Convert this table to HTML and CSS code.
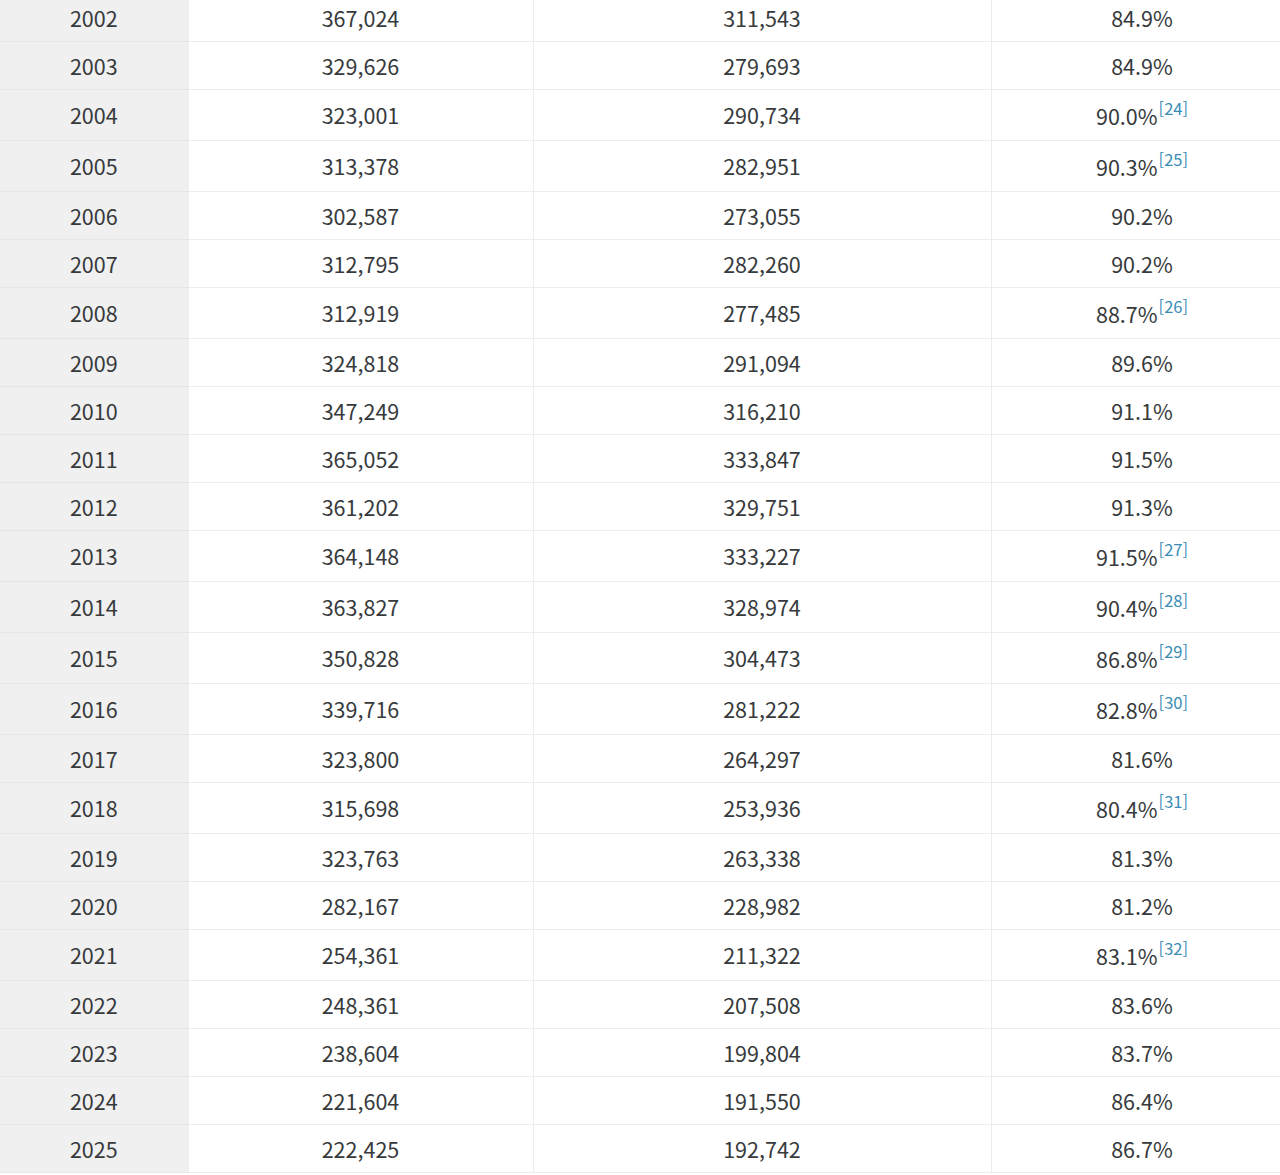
FILE: index.html
```html
<!DOCTYPE html>
<html lang="ko">
<head>
<meta charset="utf-8">
<title>Table</title>
<link rel="stylesheet" href="styles.css">
</head>
<body>
<div class="wrap">
<table class="stats">
<colgroup><col class="c1"><col class="c2"><col class="c3"><col class="c4"></colgroup>
<tbody>
<tr><td class="yr">2002</td><td>367,024</td><td>311,543</td><td>84.9%</td></tr>
<tr><td class="yr">2003</td><td>329,626</td><td>279,693</td><td>84.9%</td></tr>
<tr class="note"><td class="yr">2004</td><td>323,001</td><td>290,734</td><td>90.0%<sup>[24]</sup></td></tr>
<tr class="note"><td class="yr">2005</td><td>313,378</td><td>282,951</td><td>90.3%<sup>[25]</sup></td></tr>
<tr><td class="yr">2006</td><td>302,587</td><td>273,055</td><td>90.2%</td></tr>
<tr><td class="yr">2007</td><td>312,795</td><td>282,260</td><td>90.2%</td></tr>
<tr class="note"><td class="yr">2008</td><td>312,919</td><td>277,485</td><td>88.7%<sup>[26]</sup></td></tr>
<tr><td class="yr">2009</td><td>324,818</td><td>291,094</td><td>89.6%</td></tr>
<tr><td class="yr">2010</td><td>347,249</td><td>316,210</td><td>91.1%</td></tr>
<tr><td class="yr">2011</td><td>365,052</td><td>333,847</td><td>91.5%</td></tr>
<tr><td class="yr">2012</td><td>361,202</td><td>329,751</td><td>91.3%</td></tr>
<tr class="note"><td class="yr">2013</td><td>364,148</td><td>333,227</td><td>91.5%<sup>[27]</sup></td></tr>
<tr class="note"><td class="yr">2014</td><td>363,827</td><td>328,974</td><td>90.4%<sup>[28]</sup></td></tr>
<tr class="note"><td class="yr">2015</td><td>350,828</td><td>304,473</td><td>86.8%<sup>[29]</sup></td></tr>
<tr class="note"><td class="yr">2016</td><td>339,716</td><td>281,222</td><td>82.8%<sup>[30]</sup></td></tr>
<tr><td class="yr">2017</td><td>323,800</td><td>264,297</td><td>81.6%</td></tr>
<tr class="note"><td class="yr">2018</td><td>315,698</td><td>253,936</td><td>80.4%<sup>[31]</sup></td></tr>
<tr><td class="yr">2019</td><td>323,763</td><td>263,338</td><td>81.3%</td></tr>
<tr><td class="yr">2020</td><td>282,167</td><td>228,982</td><td>81.2%</td></tr>
<tr class="note"><td class="yr">2021</td><td>254,361</td><td>211,322</td><td>83.1%<sup>[32]</sup></td></tr>
<tr><td class="yr">2022</td><td>248,361</td><td>207,508</td><td>83.6%</td></tr>
<tr><td class="yr">2023</td><td>238,604</td><td>199,804</td><td>83.7%</td></tr>
<tr><td class="yr">2024</td><td>221,604</td><td>191,550</td><td>86.4%</td></tr>
<tr><td class="yr">2025</td><td>222,425</td><td>192,742</td><td>86.7%</td></tr>
</tbody>
</table>
</div>
</body>
</html>
```

FILE: styles.css
```css
html, body {
  margin: 0;
  padding: 0;
  background: #ffffff;
}
body {
  overflow: hidden;
  font-family: "Noto Sans CJK KR", "Noto Sans", sans-serif;
  color: #373a3c;
}
.wrap {
  width: 1280px;
  overflow: hidden;
}
.stats {
  width: 1293px;
  margin-top: -6px;
  border-collapse: collapse;
  table-layout: fixed;
  font-size: 21.5px;
}
.c1 { width: 188px; }
.c2 { width: 345px; }
.c3 { width: 458px; }
.c4 { width: 302px; }
.stats td {
  height: 47px;
  padding: 0;
  text-align: center;
  vertical-align: middle;
  line-height: 28px;
  border-bottom: 1px solid #ededed;
  border-right: 1px solid #ececec;
}
.stats tr.note td {
  height: 50px;
}
.stats td.yr {
  background: #f0f0f0;
  border-bottom-color: #e6e6e6;
  border-right-color: #eeeeee;
}
.stats sup {
  font-size: 16.5px;
  line-height: 1;
  color: #3a8db4;
  vertical-align: 10px;
  margin-left: 1px;
}
```
